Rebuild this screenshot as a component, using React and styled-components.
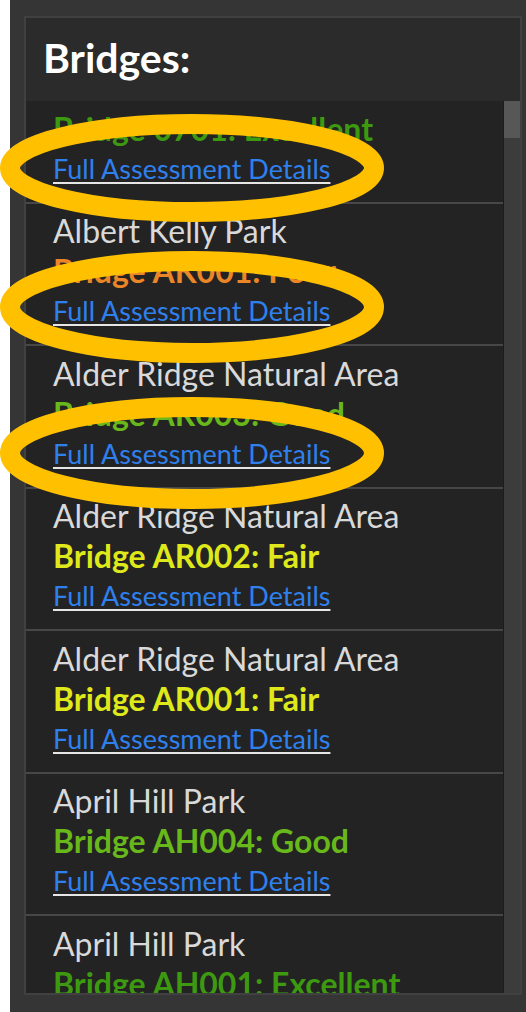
import React, { useLayoutEffect, useRef } from 'react'
import styled, { createGlobalStyle } from 'styled-components'

const GlobalStyle = createGlobalStyle`
  html, body {
    margin: 0;
    padding: 0;
    background: #ffffff;
  }
  body {
    font-family: Lato, "Noto Sans", "Liberation Sans", sans-serif;
  }
`

const Page = styled.div`
  position: relative;
  width: 526px;
  height: 1012px;
  overflow: hidden;
  background: #ffffff;
`

const Frame = styled.div`
  margin-left: 10px;
  width: 516px;
  height: 1012px;
  box-sizing: border-box;
  padding: 16px 4px 17px 14px;
  background: #353535;
`

const Panel = styled.div`
  height: 100%;
  box-sizing: border-box;
  display: flex;
  flex-direction: column;
  border: 2px solid #404040;
  background: #232323;
`

const Header = styled.div`
  height: 83px;
  box-sizing: border-box;
  flex-shrink: 0;
  display: flex;
  align-items: center;
  padding: 0 0 4px 17px;
  background: #2b2b2b;
`

const Title = styled.h2`
  margin: 0;
  color: #ffffff;
  font-size: 41px;
  font-weight: 700;
`

const ListArea = styled.div`
  flex: 1;
  min-height: 0;
  display: flex;
`

const Scroller = styled.div`
  flex: 1;
  overflow: hidden;
`

const Track = styled.div`
  width: 16px;
  flex-shrink: 0;
  background: #3c3c3c;
  border-left: 1px solid #1c1c1c;
`

const Thumb = styled.div`
  height: 37px;
  background: #575757;
`

const Item = styled.div`
  padding: 7.5px 0 14px 27px;
  border-bottom: 2px solid #474747;
`

const Park = styled.div`
  color: #d9d9d9;
  font-size: 32px;
  line-height: 40px;
  white-space: nowrap;
`

const Condition = styled.div`
  color: ${(p) => p.color};
  font-size: 32px;
  font-weight: 700;
  line-height: 40px;
  white-space: nowrap;
`

const Link = styled.a`
  display: inline-block;
  color: #2f80ed;
  font-size: 27px;
  line-height: 39px;
  text-decoration: underline;
  text-decoration-color: #e6e6e6;
  text-decoration-thickness: 2px;
  text-underline-offset: 3px;
`

const Marks = styled.svg`
  position: absolute;
  top: 0;
  left: 0;
  pointer-events: none;
`

const colors = {
  Excellent: '#3d9a10',
  Good: '#68b81c',
  Fair: '#dfe81a',
  Poor: '#ea8628',
}

const bridges = [
  { park: 'Acorn Park', id: '0701', rating: 'Excellent' },
  { park: 'Albert Kelly Park', id: 'AK001', rating: 'Poor' },
  { park: 'Alder Ridge Natural Area', id: 'AR003', rating: 'Good' },
  { park: 'Alder Ridge Natural Area', id: 'AR002', rating: 'Fair' },
  { park: 'Alder Ridge Natural Area', id: 'AR001', rating: 'Fair' },
  { park: 'April Hill Park', id: 'AH004', rating: 'Good' },
  { park: 'April Hill Park', id: 'AH001', rating: 'Excellent' },
  { park: 'Arbor Lodge Park', id: 'AL001', rating: 'Good' },
]

// annotation rings drawn over the list
const rings = [
  { cy: 168, ry: 44 },
  { cy: 307, ry: 46 },
  { cy: 453, ry: 46 },
]

const App = () => {
  const scrollRef = useRef(null)

  useLayoutEffect(() => {
    if (scrollRef.current) {
      scrollRef.current.scrollTop = 40
    }
  }, [])

  return (
    <Page>
      <GlobalStyle />
      <Frame>
        <Panel>
          <Header>
            <Title>Bridges:</Title>
          </Header>
          <ListArea>
            <Scroller ref={scrollRef}>
              {bridges.map((item, i) => (
                <Item key={i}>
                  <Park>{item.park}</Park>
                  <Condition color={colors[item.rating]}>
                    Bridge {item.id}: {item.rating}
                  </Condition>
                  <Link href="#">Full Assessment Details</Link>
                </Item>
              ))}
            </Scroller>
            <Track>
              <Thumb />
            </Track>
          </ListArea>
        </Panel>
      </Frame>
      <Marks width="526" height="1012" viewBox="0 0 526 1012">
        {rings.map((r, i) => (
          <ellipse
            key={i}
            cx="192"
            cy={r.cy}
            rx="182"
            ry={r.ry}
            fill="none"
            stroke="#ffc000"
            strokeWidth="20"
          />
        ))}
      </Marks>
    </Page>
  )
}

export default App
